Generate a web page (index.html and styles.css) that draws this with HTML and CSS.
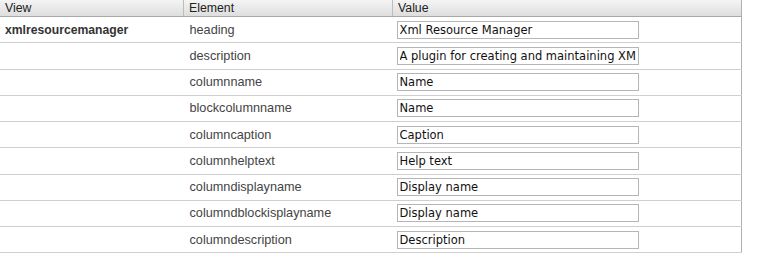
FILE: index.html
```html
<!DOCTYPE html>
<html lang="en">
<head>
    <meta charset="UTF-8">
    <title>Xml Resource Manager</title>
    <link rel="stylesheet" href="styles.css">
</head>
<body>

<table class="grid">
    <thead>
        <tr>
            <th class="col-view">View</th>
            <th class="col-element">Element</th>
            <th class="col-value">Value</th>
        </tr>
    </thead>
    <tbody>
        <tr>
            <td class="view-name">xmlresourcemanager</td>
            <td>heading</td>
            <td><input type="text" value="Xml Resource Manager"></td>
        </tr>
        <tr>
            <td></td>
            <td>description</td>
            <td><input type="text" value="A plugin for creating and maintaining XML resource files"></td>
        </tr>
        <tr>
            <td></td>
            <td>columnname</td>
            <td><input type="text" value="Name"></td>
        </tr>
        <tr>
            <td></td>
            <td>blockcolumnname</td>
            <td><input type="text" value="Name"></td>
        </tr>
        <tr>
            <td></td>
            <td>columncaption</td>
            <td><input type="text" value="Caption"></td>
        </tr>
        <tr>
            <td></td>
            <td>columnhelptext</td>
            <td><input type="text" value="Help text"></td>
        </tr>
        <tr>
            <td></td>
            <td>columndisplayname</td>
            <td><input type="text" value="Display name"></td>
        </tr>
        <tr>
            <td></td>
            <td>columndblockisplayname</td>
            <td><input type="text" value="Display name"></td>
        </tr>
        <tr>
            <td></td>
            <td>columndescription</td>
            <td><input type="text" value="Description"></td>
        </tr>
    </tbody>
</table>

</body>
</html>
```

FILE: styles.css
```css
body {
    margin: 0;
    background: #fff;
    font-family: "Liberation Sans", Arial, sans-serif;
    font-size: 12.7px;
    color: #333;
}

.grid {
    width: 742px;
    border-collapse: collapse;
    border-right: 1px solid #b0b0b0;
}

.grid th {
    height: 16px;
    padding: 0 5px;
    text-align: left;
    font-size: 12.3px;
    font-weight: normal;
    color: #222;
    background: linear-gradient(#f4f4f4, #dedede);
    border-bottom: 1px solid #a8a8a8;
    border-left: 1px solid #bdbdbd;
}

.grid th.col-view {
    border-left: none;
}

.col-view {
    width: 173px;
}

.col-element {
    width: 198px;
}

.grid td {
    height: 25.25px;
    padding: 0 5px 0 6px;
    border-bottom: 1px solid #cfcfcf;
    color: #444;
}

.grid td:first-child {
    padding-left: 5px;
}

.grid td.view-name {
    font-size: 12.2px;
    font-weight: bold;
    color: #333;
}

.grid td:last-child {
    padding-left: 4px;
}

.grid input {
    display: block;
    width: 242px;
    height: 18px;
    box-sizing: border-box;
    margin: 0;
    padding: 0 2px;
    border: 1px solid #b5b5b5;
    font-family: "DejaVu Sans", sans-serif;
    font-size: 11.5px;
    color: #111;
    background: #fff;
}
```
